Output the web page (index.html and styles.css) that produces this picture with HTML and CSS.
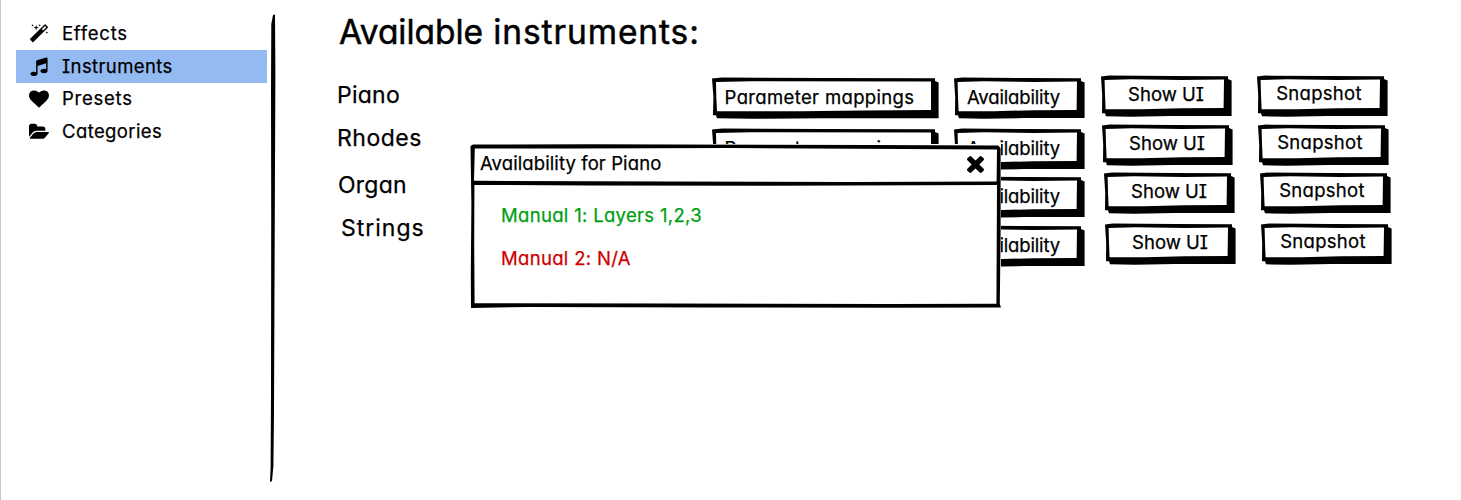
FILE: index.html
```html
<!DOCTYPE html>
<html lang="en">
<head>
<meta charset="utf-8">
<title>Available instruments</title>
<link rel="stylesheet" href="styles.css">
</head>
<body>
<svg class="defs" aria-hidden="true">
  <symbol id="frame-wide" viewBox="0 0 227 42">
    <path d="M0 1.5L10 .6L110 1L223 1.3V4L226.6 5.5V41.3L110 41.2L40 41.8L5 41.3L4 38.3H1L1.4 20Z"/>
    <path class="paper" d="M4 5L40 4.2L219 4.5V33L150 33.4L90 34.2H5L4.3 20Z"/>
  </symbol>
  <symbol id="frame" viewBox="0 0 131 42">
    <path d="M0 1.5L8 .6L70 1L127 1.3V4L130.6 5.5V41L70 41.1L30 41.8L5 41.3L4 38.3H1L1.2 20Z"/>
    <path class="paper" d="M3.6 5L30 4.2L80 5L123 4.6L122.6 33L80 33.2L40 34.2H4.6L4 20Z"/>
  </symbol>
</svg>
<div class="app">
  <nav class="sidebar">
    <a class="item effects"><svg class="icon" viewBox="0 0 1792 1792"><path d="M1254 581l293-293-107-107-293 293zm447-293q0 27-18 45l-1286 1286q-18 18-45 18t-45-18l-198-198q-18-18-18-45t18-45l1286-1286q18-18 45-18t45 18l198 198q18 18 18 45zm-1351-190l98 30-98 30-30 98-30-98-98-30 98-30 30-98zm350 162l196 60-196 60-60 196-60-196-196-60 196-60 60-196zm930 478l98 30-98 30-30 98-30-98-98-30 98-30 30-98zm-640-640l98 30-98 30-30 98-30-98-98-30 98-30 30-98z"/></svg><span>Effects</span></a>
    <a class="item selected"><svg class="icon" viewBox="0 0 1792 1792"><path d="M1664 224v1120q0 50-34 89t-86 60.5-103.5 32-96.5 10.5-96.5-10.5-103.5-32-86-60.5-34-89 34-89 86-60.5 103.5-32 96.5-10.5q105 0 192 39v-537l-768 237v709q0 50-34 89t-86 60.5-103.5 32-96.5 10.5-96.5-10.5-103.5-32-86-60.5-34-89 34-89 86-60.5 103.5-32 96.5-10.5q105 0 192 39v-967q0-31 19-56.5t49-35.5l832-256q12-4 28-4 40 0 68 28t28 68z"/></svg><span>Instruments</span></a>
    <a class="item presets"><svg class="icon" viewBox="0 0 1792 1792"><path d="M896 1664q-26 0-44-18l-624-602q-10-8-27.5-26t-55.5-65.5-68-97.5-53.5-121-23.5-138q0-220 127-344t351-124q62 0 126.5 21.5t120 58 95.5 68.5 76 68q36-36 76-68t95.5-68.5 120-58 126.5-21.5q224 0 351 124t127 344q0 221-229 450l-623 600q-18 18-44 18z"/></svg><span>Presets</span></a>
    <a class="item"><svg class="icon" viewBox="0 0 1879 1792"><path d="M1879 952q0 31-31 66l-336 396q-43 51-120.5 86.5t-143.5 35.5h-1088q-34 0-60.5-13t-26.5-43q0-31 31-66l336-396q43-51 120.5-86.5t143.5-35.5h1088q34 0 60.5 13t26.5 43zm-343-344v160h-832q-94 0-197 47.5t-164 119.5l-337 396-5 6q0-4-.5-12.5t-.5-12.5v-960q0-92 66-158t158-66h320q92 0 158 66t66 158v32h544q92 0 158 66t66 158z"/></svg><span>Categories</span></a>
  </nav>
  <svg class="divider" viewBox="0 0 8 470"><path d="M4 1L6 .5L6.4 60L5.8 200L5.4 300L5 400L4.4 452L3 467L1 468L1.6 454L2 380L2.2 200L2 75L2.3 10Z"/></svg>
  <main class="content">
    <h1 class="title"><span class="tight">Available</span> instruments:</h1>
    <div class="board">
      <div class="names">
        <div class="name piano">Piano</div>
        <div class="name rhodes">Rhodes</div>
        <div class="name organ">Organ</div>
        <div class="name strings">Strings</div>
      </div>
      <div class="column mappings">
        <button class="btn wide"><svg class="frame"><use href="#frame-wide"/></svg><span>Parameter mappings</span></button>
        <button class="btn wide"><svg class="frame"><use href="#frame-wide"/></svg><span>Parameter mappings</span></button>
      </div>
      <div class="column availability">
        <button class="btn"><svg class="frame"><use href="#frame"/></svg><span>Availability</span></button>
        <button class="btn"><svg class="frame"><use href="#frame"/></svg><span>Availability</span></button>
        <button class="btn"><svg class="frame"><use href="#frame"/></svg><span>Availability</span></button>
        <button class="btn"><svg class="frame"><use href="#frame"/></svg><span>Availability</span></button>
      </div>
      <div class="column loose show">
        <button class="btn"><svg class="frame"><use href="#frame"/></svg><span>Show UI</span></button>
        <button class="btn"><svg class="frame"><use href="#frame"/></svg><span>Show UI</span></button>
        <button class="btn"><svg class="frame"><use href="#frame"/></svg><span>Show UI</span></button>
        <button class="btn"><svg class="frame"><use href="#frame"/></svg><span>Show UI</span></button>
      </div>
      <div class="column loose snapshot">
        <button class="btn"><svg class="frame"><use href="#frame"/></svg><span>Snapshot</span></button>
        <button class="btn"><svg class="frame"><use href="#frame"/></svg><span>Snapshot</span></button>
        <button class="btn"><svg class="frame"><use href="#frame"/></svg><span>Snapshot</span></button>
        <button class="btn"><svg class="frame"><use href="#frame"/></svg><span>Snapshot</span></button>
      </div>
    </div>
  </main>
  <section class="dialog">
    <svg class="outline" viewBox="0 0 531 165">
      <path class="paper" d="M0 0H531V163H0Z"/>
      <path d="M.5 2L3 .6L120 .2L400 1L528 1.6L530.6 4V90L529.8 160L531 163.6L420 163.8L240 163.4L60 163L1 164L.8 130L1.4 60ZM4.8 4.6L4 36.8L200 37.6L380 38L526.6 37.4L527 5.4L260 4L100 4.6ZM4.4 41L4.2 100L4.6 159.2L200 159.6L420 160L526.4 159.8L527 41L300 41.8L120 41.4Z" fill-rule="evenodd"/>
    </svg>
    <header class="dialog-head">
      <span class="dialog-title">Availability for Piano</span>
      <svg class="close" viewBox="302 366 1188 1188"><path d="M1490 1322q0 40-28 68l-136 136q-28 28-68 28t-68-28l-294-294-294 294q-28 28-68 28t-68-28l-136-136q-28-28-28-68t28-68l294-294-294-294q-28-28-28-68t28-68l136-136q28-28 68-28t68 28l294 294 294-294q28-28 68-28t68 28l136 136q28 28 28 68t-28 68l-294 294 294 294q28 28 28 68z"/></svg>
    </header>
    <div class="dialog-body">
      <p class="line ok">Manual 1: Layers 1,2,3</p>
      <p class="line missing">Manual 2: N/A</p>
    </div>
  </section>
</div>
</body>
</html>
```
FILE: styles.css
```css
* { box-sizing: border-box; }
body {
  margin: 0;
  background: #fff;
  color: #000;
  font-family: Inter, Lato, sans-serif;
  font-feature-settings: "cv11", "cv08";
  font-size: 18.5px;
  -webkit-text-stroke: .25px currentColor;
}
.defs { position: absolute; width: 0; height: 0; }
.paper { fill: #fff; }
.app {
  position: relative;
  display: flex;
  height: 500px;
  overflow: hidden;
  border-left: 1px solid #c6c6c6;
}
.sidebar { width: 266px; padding: 17.3px 0 0 15px; flex: none; }
.item {
  display: flex;
  align-items: center;
  height: 32.67px;
  padding-left: 12.5px;
  line-height: 24px;
  letter-spacing: .4px;
}
.effects, .presets { letter-spacing: .75px; }
.item span { margin-top: -1px; }
.selected { background: #94baf2; }
.icon { width: 20px; height: 20px; margin-right: 13.5px; flex: none; }
.divider { width: 8px; height: 470px; margin: 14px 0 0 2px; flex: none; }
.content { flex: none; margin-left: 60px; width: 1100px; }
.title {
  margin: 11px 0 0 2px;
  font-size: 33.5px;
  font-weight: 400;
  line-height: 42px;
  letter-spacing: .9px;
  -webkit-text-stroke-width: .5px;
}
.tight { letter-spacing: -.05px; }
.board { display: flex; margin-top: 22px; }
.names { width: 375px; flex: none; padding-top: 4px; }
.name { font-size: 23px; line-height: 32px; }
.piano, .organ { letter-spacing: .25px; }
.rhodes { margin-top: 11px; letter-spacing: .5px; }
.organ { margin-top: 15px; padding-left: 1px; }
.strings { margin-top: 11px; padding-left: 4px; letter-spacing: 1px; }
.column { display: flex; flex-direction: column; flex: none; padding-top: 2px; }
.mappings { gap: 9px; width: 242px; letter-spacing: .35px; }
.availability { width: 147px; letter-spacing: -.15px; }
.availability .btn:nth-child(2) { margin-top: 9px; }
.availability .btn:nth-child(3) { margin-top: 6px; }
.availability .btn:nth-child(4) { margin-top: 7px; }
.loose { padding-top: 0; width: 156px; }
.loose .btn:nth-child(2) { margin: 7px 0 0 1px; }
.loose .btn:nth-child(3) { margin: 6px 0 0 3px; }
.loose .btn:nth-child(4) { margin: 9px 0 0 4px; }
.snapshot { letter-spacing: .3px; }
.btn {
  position: relative;
  width: 131px;
  height: 42px;
  padding: 0 12px 2px 0;
  border: 0;
  background: none;
  color: inherit;
  font: inherit;
  font-feature-settings: inherit;
  letter-spacing: inherit;
  line-height: 38px;
  text-align: center;
  white-space: nowrap;
}
.wide { width: 227px; }
.show .btn { padding: 0 1px 5px 0; }
.snapshot .btn { padding: 0 7px 6px 0; }
.loose .btn { line-height: 36px; }
.frame { position: absolute; inset: 0; width: 100%; height: 100%; }
.btn span { position: relative; }
.dialog {
  position: absolute;
  left: 469px;
  top: 144px;
  width: 531px;
  height: 165px;
}
.outline { position: absolute; inset: 0; width: 531px; height: 165px; }
.dialog-head {
  position: relative;
  display: flex;
  justify-content: space-between;
  align-items: center;
  height: 38px;
  padding: 0 17px 0 10px;
  letter-spacing: .1px;
}
.close { width: 17px; height: 17px; margin-top: 3px; }
.dialog-body { position: relative; padding: 21px 0 0 31px; letter-spacing: .32px; }
.line { margin: 0 0 19px; line-height: 24px; }
.ok { color: #009f12; }
.missing { color: #cc0000; }
```
